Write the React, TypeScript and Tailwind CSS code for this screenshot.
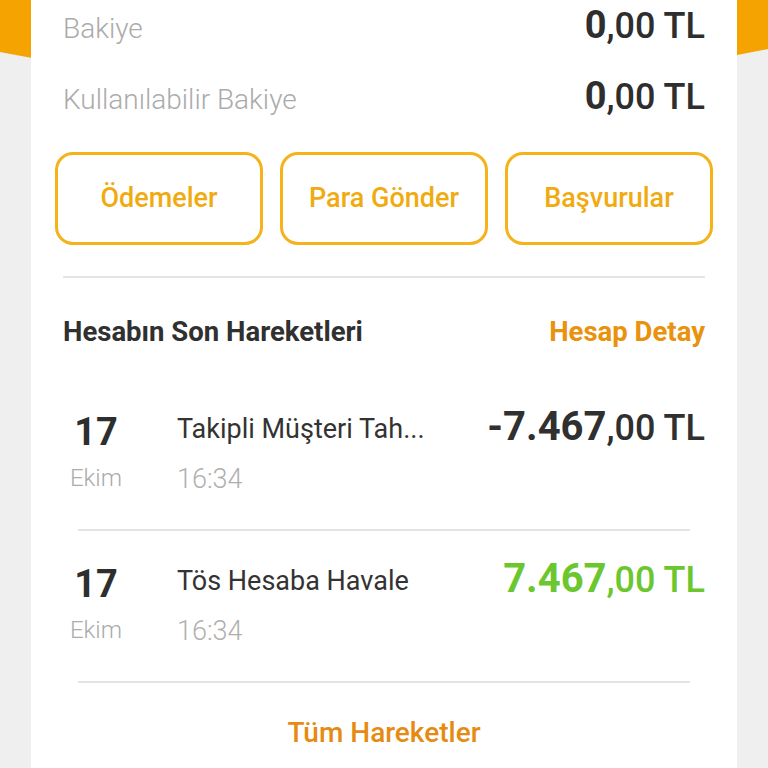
import React from "react";

const txns = [
  { title: "Takipli Müşteri Tah...", time: "16:34", whole: "-7.467", dec: ",00 TL", color: "text-[#303030]" },
  { title: "Tös Hesaba Havale", time: "16:34", whole: "7.467", dec: ",00 TL", color: "text-[#6cc62f]" },
];

function Amount({ whole, dec, big, small, color }: { whole: string; dec: string; big: string; small: string; color: string }) {
  return (
    <div className={`flex items-baseline leading-none ${color}`}>
      <span className={`${big} font-bold`}>{whole}</span>
      <span className={`${small} font-medium`}>{dec}</span>
    </div>
  );
}

export default function App() {
  return (
    <div
      className="relative h-[768px] w-[768px] overflow-hidden bg-[#efefef]"
      style={{ fontFamily: "Roboto, 'Noto Sans', sans-serif" }}
    >
      {/* orange header behind the card */}
      <svg className="absolute left-0 top-0" width="768" height="140" viewBox="0 0 768 140">
        <polygon points="0,0 768,0 768,49 384,124 0,52" fill="#f5a300" />
      </svg>

      <div className="relative mx-[31px] h-full bg-white px-8 pt-[6px]">
        {/* balances */}
        <div className="flex items-baseline justify-between">
          <span className="text-[28px] font-light leading-none text-[#ababab]">Bakiye</span>
          <Amount whole="0" dec=",00 TL" big="text-[38px]" small="text-[36px]" color="text-[#2e2e2e]" />
        </div>
        <div className="mt-[33px] flex items-baseline justify-between">
          <span className="text-[28px] font-light leading-none text-[#ababab]">Kullanılabilir Bakiye</span>
          <Amount whole="0" dec=",00 TL" big="text-[38px]" small="text-[36px]" color="text-[#2e2e2e]" />
        </div>

        {/* actions */}
        <div className="-mx-2 mt-[37px] grid grid-cols-3 gap-[17px]">
          {["Ödemeler", "Para Gönder", "Başvurular"].map((b) => (
            <button
              key={b}
              className="flex h-[93px] items-center justify-center rounded-[18px] border-[3px] border-[#f5b21a] text-[27px] font-medium text-[#f0ab10]"
            >
              {b}
            </button>
          ))}
        </div>

        <div className="mt-[31px] h-[2px] bg-[#e4e4e4]" />

        <div className="mt-[40px] flex items-center justify-between text-[27.5px] font-bold leading-none">
          <span className="text-[#303030]">Hesabın Son Hareketleri</span>
          <span className="text-[#e8920e]">Hesap Detay</span>
        </div>

        <div className="mt-[33px]">
          {txns.map((t, i) => (
            <div key={i}>
              <div className="flex h-[150px] items-start">
                <div className="flex w-[66px] flex-col items-center pt-[34px] leading-none">
                  <span className="text-[38px] font-bold text-[#2e2e2e]">17</span>
                  <span className="mt-[15px] text-[24px] font-light text-[#ababab]">Ekim</span>
                </div>
                <div className="ml-[48px] flex flex-col pt-[37px] leading-none">
                  <span className="text-[27px] text-[#333333]">{t.title}</span>
                  <span className="mt-[23px] text-[27px] font-light text-[#b0b0b0]">{t.time}</span>
                </div>
                <div className="ml-auto pt-[28px]">
                  <Amount whole={t.whole} dec={t.dec} big="text-[40px]" small="text-[36px]" color={t.color} />
                </div>
              </div>
              <div className="mx-[15px] h-[2px] bg-[#e4e4e4]" />
            </div>
          ))}
        </div>

        <div className="mt-[36px] text-center text-[28px] font-medium leading-none text-[#e68b12]">
          Tüm Hareketler
        </div>
      </div>
    </div>
  );
}
